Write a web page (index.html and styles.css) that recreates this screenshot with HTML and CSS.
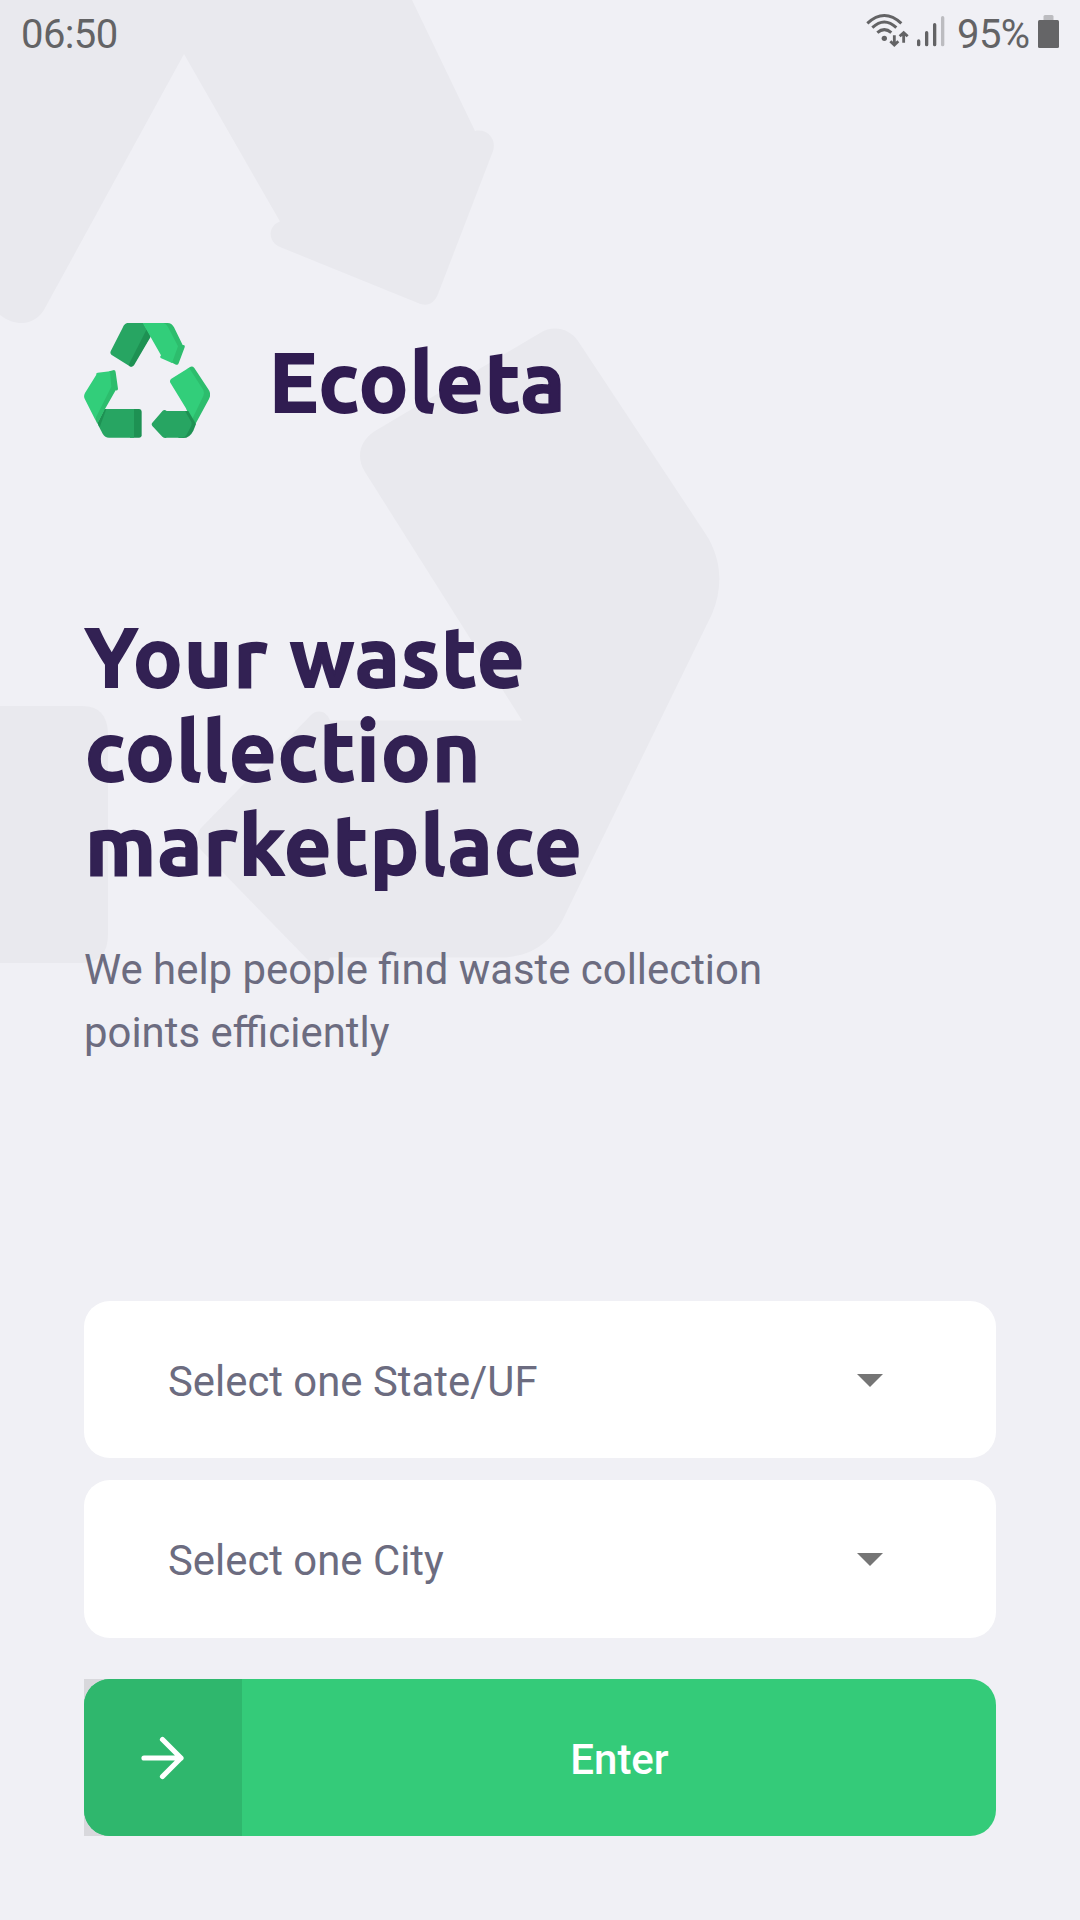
FILE: index.html
```html
<!DOCTYPE html>
<html lang="en">
<head>
<meta charset="utf-8">
<title>Ecoleta</title>
<link rel="stylesheet" href="styles.css">
</head>
<body>
<div class="screen">
  <svg class="backdrop" viewBox="0 0 730 980" aria-hidden="true">
    <path d="M0 0H412L475 131C487 128 497 139 493 151L438 294C434 304 427 307 418 303L280 247C267 241 268 226 280 221.500L184 54L45 308C38 322 20 330 0 315Z"/>
    <path d="M375 431L540 333C553 325 569 328 578 341L705 533C721 557 724 585 712 614L566 913C553 942 531 957.500 500 957.500H330C327 965 316 971 309 961L201 850C196 845 196 833 201 828L310 716C317 708 327 711 330 720.500H522L365 472C356 458 359 441 375 431Z"/>
    <path d="M0 706H82Q108 706 108 735V934Q108 963 82 963H0Z"/>
  </svg>

  <header class="status">
    <span class="clock">06:50</span>
    <div class="indicators">
      <svg class="signals" viewBox="0 0 240 70" aria-hidden="true">
        <g fill="none" stroke="#636365" stroke-width="9">
          <path d="M79 70Q130 23 181 70"/>
          <path d="M94 83Q130 49 166 83"/>
          <path d="M109 98Q130 80 151 98"/>
          <path stroke-width="8.500" d="M160 106V134M148 124L160 135L172 124M188 128V99M176 109L188 98L200 109"/>
          <path stroke-width="10" stroke-linecap="round" d="M233 123V134M257 98V134M281 74V134"/>
          <path stroke="#bcbcc0" stroke-width="10" stroke-linecap="round" d="M305 53V134"/>
        </g>
        <circle cx="130" cy="115" r="8" fill="#636365"/>
      </svg>
      <span class="percent">95%</span>
      <svg class="battery" viewBox="0 0 21 33" aria-hidden="true">
        <path fill="#bcbcc0" d="M5.500 6V1.500Q5.500 0 7 0H14Q15.500 0 15.500 1.500V6Z"/>
        <rect y="5" width="21" height="28" rx="1.500" fill="#656567"/>
      </svg>
    </div>
  </header>

  <main class="content">
    <div class="brand">
      <svg class="logo" viewBox="42 39 378 345" aria-hidden="true">
        <path fill="#27a562" d="M172 39H220L242 78L190 166Q185 172 178 168L124 134Q119 130 122 124L158 53Q163 41 172 39Z"/>
        <path fill="#1e9153" d="M230 58L242 80L192 166Q187 172 179 169L176 164Z"/>
        <path fill="#2dbd6d" d="M270 39H293Q305 39 312 52L338 105Q346 104 344 112L326 160Q324 166 318 164L302 156Z"/>
        <path fill="#32ce7a" d="M218 39H280Q288 40 294 51L324 109L306 159L272 144Q268 141 273 136Z"/>
        <path fill="#2dbd6d" d="M352 177L360 171Q367 167 373 174L415 238Q425 252 417 267L376 343L350 300Z"/>
        <path fill="#32ce7a" d="M304 206L357 173L400 240Q404 249 400 258L367 326L302 220Q297 212 304 206Z"/>
        <path fill="#1e9153" d="M340 303H355L378 342L370 362Q359 384 340 384H325Z"/>
        <path fill="#27a562" d="M278 302Q284 298 290 303H345L364 336Q366 342 363 349L349 376Q345 383 335 383H290Q284 386 277 380L247 348Q243 343 247 338Z"/>
        <path fill="#1e9153" d="M180 297H208Q215 298 215 305V376Q215 383 208 383H180Z"/>
        <path fill="#27a562" d="M103 297H192V383H117Q105 383 98 371L84 344Z"/>
        <path fill="#1e9153" d="M104 297H109L89 352L82 339Z"/>
        <path fill="#2dbd6d" d="M118 184L132 180Q137 181 137 187L144 236Q144 243 137 241L105 297L82 341L75 327Z"/>
        <path fill="#32ce7a" d="M79 194Q77 189 83 188L120 184L124 230L75 328L44 266Q40 258 45 249Z"/>
      </svg>
      <span class="wordmark">Ecoleta</span>
    </div>

    <h1 class="title">
      <span class="line">Your waste</span>
      <span class="line">collection</span>
      <span class="line">marketplace</span>
    </h1>
    <p class="description">We help people find waste collection points efficiently</p>

    <form class="picker">
      <div class="select"><span>Select one State/UF</span><i class="caret"></i></div>
      <div class="select select-city"><span>Select one City</span><i class="caret"></i></div>
      <div class="enter-wrap">
        <button class="enter" type="button">
          <span class="enter-icon">
            <svg viewBox="0 0 44 44" aria-hidden="true"><path d="M3 22H40M21.500 3.500L40 22L21.500 40.500"/></svg>
          </span>
          <span class="enter-label">Enter</span>
        </button>
      </div>
    </form>
  </main>
</div>
</body>
</html>
```
FILE: styles.css
```css
* { box-sizing: border-box; }
body { margin: 0; background: #f0f0f5; }
.screen {
  position: relative;
  width: 1080px;
  height: 1920px;
  overflow: hidden;
  background: #f0f0f5;
  font-family: Roboto, sans-serif;
}
.backdrop {
  position: absolute;
  top: 0;
  left: 0;
  width: 730px;
  height: 980px;
  fill: #e9e9ee;
}
.status {
  position: relative;
  display: flex;
  justify-content: space-between;
  height: 70px;
  padding: 0 21px 0 21px;
  color: #636365;
  font-size: 40px;
  line-height: 69px;
}
.clock { letter-spacing: -0.6px; }
.indicators { display: flex; }
.signals { width: 240px; height: 70px; margin-right: -123.5px; }
.signals g, .signals circle { transform: scale(0.3333); }
.percent { letter-spacing: -0.6px; }
.battery { width: 21px; height: 33px; margin: 15px 0 0 8.5px; }

.content {
  position: relative;
  padding: 253px 84px 0;
}
.brand { display: flex; height: 115px; }
.logo { width: 126px; height: 115px; }
.wordmark {
  margin: 12px 0 0 59px;
  color: #301c51;
  font: 700 82.5px/94px Ubuntu, "Noto Sans", sans-serif;
  letter-spacing: 1.3px;
  -webkit-text-stroke: 1.8px #301c51;
}
.title {
  margin: 172px 0 0 1px;
  color: #322153;
  font: 700 82.5px/94px Ubuntu, "Noto Sans", sans-serif;
  letter-spacing: 1.35px;
  -webkit-text-stroke: 1.8px #322153;
}
.line { display: block; white-space: nowrap; }
.description {
  width: 720px;
  margin: 46px 0 0;
  color: #6c6c80;
  font-size: 41.88px;
  line-height: 63px;
}
.picker { margin-top: 237px; }
.select {
  display: flex;
  align-items: center;
  justify-content: space-between;
  height: 157px;
  margin-bottom: 22px;
  padding: 0 113px 0 84px;
  border-radius: 26px;
  background: #fff;
  color: #6c6c80;
  font-size: 41.85px;
}
.select span { padding-top: 3px; }
.select-city { height: 158px; }
.caret {
  margin-top: 1px;
  border: solid transparent;
  border-width: 13px 13px 0;
  border-top-color: #757575;
}
.enter-wrap {
  margin-top: 41px;
  background: linear-gradient(#d8d8dc, #d8d8dc) left / 40px 100% no-repeat;
}
.enter {
  display: flex;
  width: 912px;
  height: 157px;
  padding: 0;
  border: 0;
  border-radius: 26px;
  background: #34cb79;
  color: #fff;
  font: 500 42px Roboto, sans-serif;
}
.enter-icon {
  display: flex;
  align-items: center;
  justify-content: center;
  width: 158px;
  height: 157px;
  border-radius: 26px 0 0 26px;
  background: #2fb76d;
}
.enter-icon svg {
  width: 44px;
  height: 44px;
  fill: none;
  stroke: #fff;
  stroke-width: 5.2;
  stroke-linecap: round;
  stroke-linejoin: round;
}
.enter-label { flex: 1; align-self: center; padding: 3px 0 0 1px; }
```
